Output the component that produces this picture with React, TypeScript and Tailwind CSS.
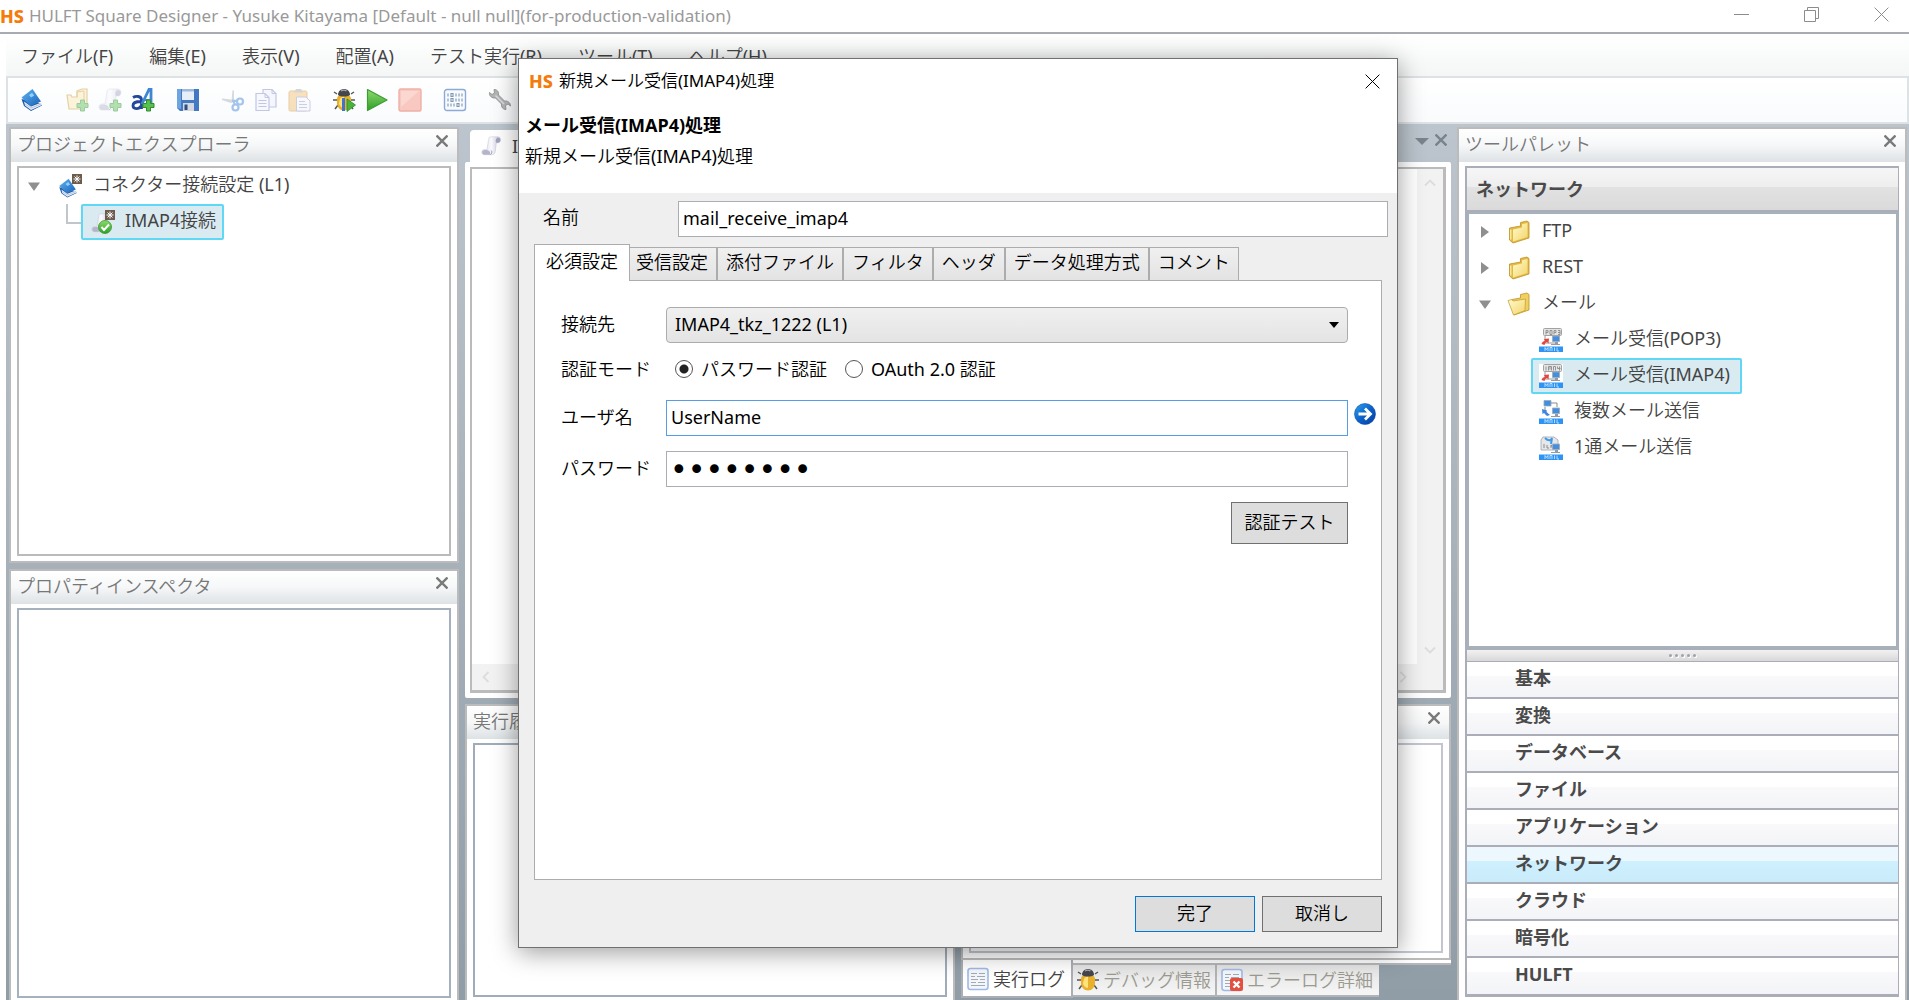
import { useState } from 'react';
import type { ReactNode } from 'react';

const menus = ['ファイル(F)', '編集(E)', '表示(V)', '配置(A)', 'テスト実行(R)', 'ツール(T)', 'ヘルプ(H)'];

const categories = [
  '基本',
  '変換',
  'データベース',
  'ファイル',
  'アプリケーション',
  'ネットワーク',
  'クラウド',
  '暗号化',
  'HULFT',
];

const dialogTabs = ['必須設定', '受信設定', '添付ファイル', 'フィルタ', 'ヘッダ', 'データ処理方式', 'コメント'];

const boldClass = "font-['Noto_Sans','Noto_Sans_CJK_JP',sans-serif] font-bold";

/* ---------- icons ---------- */

function Gradients() {
  return (
    <svg className="absolute h-0 w-0" aria-hidden="true">
      <defs>
        <linearGradient id="gBlue" x1="0" y1="0" x2="1" y2="1">
          <stop offset="0" stopColor="#5db4f2" />
          <stop offset="1" stopColor="#1b62b8" />
        </linearGradient>
        <linearGradient id="gGold" x1="0" y1="0" x2="1" y2="1">
          <stop offset="0" stopColor="#fffbd0" />
          <stop offset="1" stopColor="#f3d468" />
        </linearGradient>
        <linearGradient id="gGreen" x1="0" y1="0" x2="0" y2="1">
          <stop offset="0" stopColor="#8edb6c" />
          <stop offset="1" stopColor="#2f9e2a" />
        </linearGradient>
        <linearGradient id="gPaper" x1="0" y1="0" x2="1" y2="0">
          <stop offset="0" stopColor="#d4d4e4" />
          <stop offset="0.5" stopColor="#fbfbff" />
          <stop offset="1" stopColor="#c4c4da" />
        </linearGradient>
        <linearGradient id="gArrow" x1="0" y1="0" x2="1" y2="1">
          <stop offset="0" stopColor="#2fa5ee" />
          <stop offset="0.5" stopColor="#0b62cc" />
          <stop offset="1" stopColor="#083a9c" />
        </linearGradient>
      </defs>
    </svg>
  );
}

function Icon({ children, faded }: { children: ReactNode; faded?: boolean }) {
  return (
    <svg viewBox="0 0 24 24" aria-hidden="true" className={`h-6 w-6 flex-none ${faded ? 'opacity-45' : ''}`}>
      {children}
    </svg>
  );
}

const book = (
  <>
    <path d="M1.500 11 4 18l7 5 11-5.500-1-2z" fill="#1b5cae" />
    <path d="m4 13.500 7 5 10.500-4 .5 2.500-11 5-6-4.500z" fill="#e9eef5" />
    <path d="m5 16 6 4 10-4" fill="none" stroke="#a9b7c9" strokeWidth=".8" />
    <path d="M1.500 9.500 12.500 1l8.500 12.500L10.500 18z" fill="url(#gBlue)" />
    <path d="m9 7 3-2.200 2.200 2.700-3.200 2z" fill="#8fd0fa" />
  </>
);

const newBadge = (
  <>
    <path d="M14 0h10v10H14z" fill="#6d5c4c" />
    <path d="M19 1.500v7M15.500 5h7M16.500 2.500l5 5M21.500 2.500l-5 5" stroke="#fff" strokeWidth="1" />
  </>
);

const scroll = (
  <>
    <path d="M9 4c0-2 1-3 3-3h8c2 0 3 1.500 3 3.500S22 8 20 8h-2l-1 9c-.3 3-1.500 5-4 5H4c-2 0-3-1.500-3-3s1-3 3-3h3z" fill="url(#gPaper)" stroke="#c3c3d6" strokeWidth=".6" />
    <path d="M18 8c-1-1-1-4 .5-5.500C21 1.500 23 3 22.500 5.500 22 8 20 8 18 8z" fill="#a2a2bf" />
    <path d="M2 17.500c2-1.500 6-1 8 .5 1 1.500 1 3 .5 4H4c-2 0-3-2-2-4.500z" fill="#b5b5ca" />
    <path d="M12 17c1.500 2 .5 4-1 5" fill="none" stroke="#8c8ca8" />
  </>
);

const plusBadge = (
  <path d="M15.500 12h4v3.500H23v4h-3.500V23h-4v-3.500H12v-4h3.500z" fill="#59c04f" stroke="#2d8e2b" strokeWidth="1" />
);

const folder = (
  <>
    <path d="M2.500 8 13.500 6V2.500L20 1l2 1.500V18L6 23l-3.500-3z" fill="#e3b941" stroke="#bd9327" strokeWidth=".8" />
    <path d="m6 9.500 9-2V4.200l5.500-1.200v14L6 21.500z" fill="url(#gGold)" />
    <path d="M3.800 9.500v10" stroke="#fff3b0" strokeWidth="1.200" />
  </>
);

const folderOpen = (
  <>
    <path d="M5 7.500 13.500 6V2.500L20 1l2 1.500V18L7 23z" fill="#f0d060" stroke="#bd9327" strokeWidth=".8" />
    <path d="M1 8.500 5 7.500 6 9l12.500-2L18 18.500 6.500 23z" fill="url(#gGold)" stroke="#c9a136" strokeWidth=".8" />
  </>
);

const bug = (
  <>
    <path d="M5 6 2 4M19 6l3-2M5 12H1M19 12h4M6 17l-3 4M18 17l3 4" stroke="#55565c" strokeWidth="1.500" fill="none" />
    <path d="M5 11c0-3 3-5 7-5s7 2 7 5v4c0 4-3 7.500-7 7.500S5 19 5 15z" fill="#e8b02c" />
    <path d="M8 11c1-2 3-2.500 4-2.500V20c-3 0-5-3-5-5z" fill="#ffe37a" />
    <path d="M6 7c0-4 3-6 6-6s6 2 6 6c-3 2-9 2-12 0z" fill="#45464c" />
    <path d="M9 3c1.500-1 4-1 5.500 0" stroke="#a8abb1" fill="none" strokeWidth="1.200" />
  </>
);

const logSheet = (
  <>
    <rect x="2" y="1.500" width="20" height="21" rx="2.500" fill="#f3f6fb" stroke="#9fbae6" strokeWidth="1.600" />
    <path d="M5 6.500h6M13 6.500h6M5 9.500h4M11 9.500h8M5 12.500h7M14 12.500h5M5 15.500h5M12 15.500h7M5 18.500h14" stroke="#a4aab4" strokeWidth="1.200" />
  </>
);

const icons = {
  book: <Icon>{book}</Icon>,
  folderPlus: (
    <Icon faded>
      <path d="M2 7h4l1 2h5V3l5-2h5v16l-5 4H4z" fill="#fbeab0" stroke="#c99b36" strokeWidth="1.200" />
      <path d="M12 9V4l7-1v14" fill="none" stroke="#c99b36" />
      {plusBadge}
    </Icon>
  ),
  scrollPlus: (
    <Icon faded>
      {scroll}
      {plusBadge}
    </Icon>
  ),
  letters: (
    <Icon>
      <path d="M2 9.500c2.500-1.500 8.500-2 8.500 2.500v9M10 13.500c-4 0-8 .5-8 4 0 4 6 4 8 .5" fill="none" stroke="#23479b" strokeWidth="2.800" />
      <path d="M11 16 18 1.500h2V20" fill="none" stroke="#3f86d3" strokeWidth="2.800" />
      <path d="M14 12h6" stroke="#3f86d3" strokeWidth="2" />
      {plusBadge}
    </Icon>
  ),
  save: (
    <Icon>
      <path d="M1 1h22v22H4l-3-3z" fill="#4379c2" />
      <path d="M1 1h4v20l-4-1z" fill="#6ea4e2" />
      <path d="M6 1h12v11H6z" fill="#e8eef7" />
      <path d="M6 1h12v2.500H6z" fill="#9eb9de" />
      <path d="M7 15h11v8H7z" fill="#d4d9df" />
      <path d="M8.500 16.500h3V22h-3z" fill="#2b4d80" />
    </Icon>
  ),
  cut: (
    <Icon faded>
      <path d="m11.500 2 1.500 1v9l-2.500 1zM1 10.500l9 1 3 2-3 1.500-9-3z" fill="#a9aeb6" />
      <circle cx="19" cy="13.500" r="3" fill="none" stroke="#3c7fd6" strokeWidth="2.200" />
      <circle cx="14.500" cy="19.500" r="3" fill="none" stroke="#3c7fd6" strokeWidth="2.200" />
      <path d="m11 12.500 5 .5M12 13l2 3.500" stroke="#3c7fd6" strokeWidth="2" />
    </Icon>
  ),
  copy: (
    <Icon faded>
      <path d="M9 1.500h9l4 4V19H9z" fill="#eef0fc" stroke="#7d85c6" strokeWidth="1.200" />
      <path d="M2 5.500h9l4 4v13H2z" fill="#f4f5fe" stroke="#7d85c6" strokeWidth="1.200" />
      <path d="M11 5.500v4h4M18 1.500v4h4M4.500 12.500h8M4.500 15.500h8M4.500 18.500h8" fill="none" stroke="#7d85c6" />
    </Icon>
  ),
  paste: (
    <Icon faded>
      <rect x="2" y="3" width="18" height="20" rx="1.500" fill="#f2bf6e" stroke="#d1923c" />
      <path d="M7 4.500 9 1h5l2 3.500z" fill="#a7a7ad" />
      <path d="M9.500 9H19l4 4v10H9.500z" fill="#f4f4fd" stroke="#9297c4" />
      <path d="M12 13.500h6M12 16.500h8M12 19.500h8" stroke="#9297c4" />
    </Icon>
  ),
  debug: (
    <Icon>
      {bug}
      <path d="M10 10h3v13h-3z" fill="#3d73d1" />
      <path d="m15 11 8.500 6-8.500 6.500z" fill="#49b33c" stroke="#2c8d26" strokeWidth=".8" />
    </Icon>
  ),
  play: (
    <Icon>
      <path d="M2.500 1.500 22 12 2.500 22.500z" fill="url(#gGreen)" stroke="#3d9d33" strokeWidth="1.200" strokeLinejoin="round" />
    </Icon>
  ),
  stop: (
    <Icon faded>
      <rect x="1" y="1" width="22" height="22" rx="1.500" fill="#f58a78" stroke="#e0533f" strokeWidth="1.400" />
      <path d="M3 3h18L3 19z" fill="#f8aa9b" />
    </Icon>
  ),
  binary: (
    <Icon>
      <rect x="1.500" y="1.500" width="21" height="21" rx="2.500" fill="#f7faff" stroke="#8faad2" strokeWidth="1.400" />
      <path d="M5 5.500v3M8 5.500h2v3H8zM13 5.500v3M16 5.500v3M19 5.500v3M5 10.500v3M8 10.500h2v3H8zM13 10.500v3M16 10.500v3M19 10.500v3M5 15.500v3M8 15.500v3M11 15.500v3M14 15.500h2v3h-2zM19 15.500v3" fill="none" stroke="#7f95b0" strokeWidth="1.100" />
    </Icon>
  ),
  wrench: (
    <Icon>
      <path d="M1.500 4.500 4 6.500 6.500 5 6 1.500c3 0 5 2 4.500 5.500l6 6c3-.5 6 1.500 6 5l-2.500-2-2.500 1.500.5 4c-3 0-5-2.500-4.500-5.500l-6-6C4 10.500 1 8 1.500 4.500z" fill="#b4b4b4" stroke="#929292" strokeWidth=".9" />
      <path d="m7.500 7.500 8.500 8.500" stroke="#dcdcdc" strokeWidth="1.400" />
    </Icon>
  ),
};

const toolGroups: { name: string; label: string }[][] = [
  [{ name: 'book', label: 'プロジェクト' }],
  [
    { name: 'folderPlus', label: 'フォルダ追加' },
    { name: 'scrollPlus', label: 'スクリプト追加' },
    { name: 'letters', label: '変数追加' },
  ],
  [{ name: 'save', label: '保存' }],
  [
    { name: 'cut', label: '切り取り' },
    { name: 'copy', label: 'コピー' },
    { name: 'paste', label: '貼り付け' },
  ],
  [
    { name: 'debug', label: 'デバッグ実行' },
    { name: 'play', label: '実行' },
    { name: 'stop', label: '停止' },
  ],
  [{ name: 'binary', label: 'データ' }],
  [{ name: 'wrench', label: '設定' }],
];

function MailIcon({ kind }: { kind: 'pop' | 'imap' | 'multi' | 'single' }) {
  const receive = kind === 'pop' || kind === 'imap';
  return (
    <svg viewBox="0 0 24 24" aria-hidden="true" className="h-6 w-6 flex-none">
      <path d="M0 0h24v24H0z" fill="#fff" />
      {receive && (
        <>
          <rect x="4.500" y=".5" width="18" height="7" rx="1" fill="#e4e4e4" stroke="#a2a2a2" />
          {kind === 'pop' ? (
            <path d="M7 6.500v-4h2v2H7M11 2.500h2v4h-2zM15 6.500v-4h2v2h-2M19 2.500h2v4h-2M19 4.500h2" fill="none" stroke="#8a8a8a" strokeWidth=".9" />
          ) : (
            <path d="M7 2.500v4M9.500 6.500v-4h3v4M11 2.500v3M14.500 6.500v-4h2v4M18.500 2.500v2h3M20.500 2.500v4" fill="none" stroke="#8a8a8a" strokeWidth=".9" />
          )}
          <path d="M6 8v7h10" fill="none" stroke="#9a9a9a" />
          <path d="M2.500 16c.5-2 2-3 3.500-3l-1-2 5-.5-.5 5-1.500-1.500c-2 .5-2 2-2.500 3z" fill="#e8433c" />
        </>
      )}
      {kind === 'multi' && (
        <>
          <path d="M5 .5h7V6H5z" fill="#3f8fe2" stroke="#a0a8b2" strokeWidth=".8" />
          <path d="M12 3h6v4M6 7v5" fill="none" stroke="#8b8b8b" />
          <path d="m3 9 5 1.500-.5 1.500 3.500 3-3 1-3-3-1.500 1z" fill="#3d86e0" />
        </>
      )}
      {kind === 'single' && (
        <>
          <path d="M4 1h11l4 3v10H2V4z" fill="#e5e7ea" stroke="#9fa3a9" strokeWidth=".8" />
          <path d="M6 2c3 3 6 3 7 0l-1 6" fill="none" stroke="#3e9ae6" strokeWidth="2" />
          <path d="M4 9h2M4 11h2M8 9v3h2M12 12V9l2 3V9M16 9v3" fill="none" stroke="#8a8a8a" />
        </>
      )}
      <path d="M13.500 8h7v5.500h-7z" fill="#3f8fe2" stroke="#a5adb8" strokeWidth=".9" />
      <path d="M16 14h3v2h-3zM12 16h9v1h-9z" fill="#969ca5" />
      <path d="M0 18.500h24V24H0z" fill="#2e94f4" />
      <path d="M6 23v-3.500l1.500 2L9 19.500V23M11 23v-3.500h2V23M15.500 19.500V23M18 19.500V23h2" fill="none" stroke="#d7ecff" strokeWidth=".8" />
    </svg>
  );
}

function Cross({ className, width = 1 }: { className: string; width?: number }) {
  return (
    <svg viewBox="0 0 12 12" aria-hidden="true" className={className}>
      <path d="m.5.5 11 11M11.500.5l-11 11" stroke="currentColor" strokeWidth={width} fill="none" />
    </svg>
  );
}

function Caret({ open }: { open?: boolean }) {
  return (
    <svg viewBox="0 0 12 12" aria-hidden="true" className="h-3 w-3 flex-none fill-[#8f8f8f]">
      <path d={open ? 'M0 2.500h12L6 11z' : 'M2 0v12l8-6z'} />
    </svg>
  );
}

function Chevron({ className = '' }: { className?: string }) {
  return (
    <svg viewBox="0 0 12 12" aria-hidden="true" className={`h-3 w-3 flex-none text-[#dcdcdc] ${className}`}>
      <path d="m1 8.500 5-5 5 5" stroke="currentColor" strokeWidth="1.800" fill="none" />
    </svg>
  );
}

/* ---------- panels ---------- */

interface PanelProps {
  title: string;
  className?: string;
  children: ReactNode;
}

function Panel({ title, className = '', children }: PanelProps) {
  return (
    <section className={`flex min-h-0 flex-col border-2 border-[#bbb] bg-white px-1.5 ${className}`}>
      <header className="-mx-1.5 mb-1 flex h-[33px] flex-none items-start justify-between bg-linear-to-b from-white via-[#f6f7f8] to-[#dde2e5] pr-[9px] pl-1.5">
        <h2 className="pt-px leading-7 text-[#777]">{title}</h2>
        <button type="button" aria-label={`${title}を閉じる`} className="mt-1.5 text-[#7a7a7a]">
          <Cross className="h-3 w-3" width={2.4} />
        </button>
      </header>
      {children}
    </section>
  );
}

function ProjectTree() {
  return (
    <ul className="min-h-0 flex-1 border-2 border-[#bbb]">
      <li>
        <div className="flex h-9 items-center pl-[9px]">
          <Caret open />
          <span className="ml-[18px]">
            <Icon>
              <g transform="translate(0 4) scale(.85)">{book}</g>
              {newBadge}
            </Icon>
          </span>
          <span className="ml-[11px] pb-1">コネクター接続設定 (L1)</span>
        </div>
        <ul className="flex pl-[47px]">
          <li className="flex">
            <span className="h-5 w-[15px] border-b-2 border-l-2 border-[#bfc6cc]" />
            <div className="flex h-9 items-center rounded-xs border-2 border-[#5fd8f5] bg-[#daeaf1] pr-1.5 pl-2">
              <Icon>
                <g transform="translate(0 3) scale(.85)">{scroll}</g>
                {newBadge}
                <circle cx="14" cy="17" r="6.500" fill="url(#gGreen)" stroke="#2f9a2b" strokeWidth=".8" />
                <path d="m10.500 17 2.500 3 5-5.500" stroke="#fff" strokeWidth="2" fill="none" />
              </Icon>
              <span className="ml-2.5 pb-1">IMAP4接続</span>
            </div>
          </li>
        </ul>
      </li>
    </ul>
  );
}

function Palette() {
  const folders = [{ name: 'FTP' }, { name: 'REST' }, { name: 'メール', open: true }];
  const tools: { kind: 'pop' | 'imap' | 'multi' | 'single'; name: string }[] = [
    { kind: 'pop', name: 'メール受信(POP3)' },
    { kind: 'imap', name: 'メール受信(IMAP4)' },
    { kind: 'multi', name: '複数メール送信' },
    { kind: 'single', name: '1通メール送信' },
  ];

  return (
    <div className="mb-[3px] flex min-h-0 flex-1 flex-col border-2 border-r-1 border-[#abaeb8]">
      <h3
        className={`flex h-[44px] flex-none items-center border-b-2 border-[#abaeb8] bg-[linear-gradient(#f6f6f6,#eeeeee_44%,#e2e2e2_46%,#dadada)] pl-[9px] text-[#4a4a4a] ${boldClass}`}
      >
        ネットワーク
      </h3>
      <div className="min-h-0 flex-1 border-2 border-[#a5b1bb]">
        <ul>
          {folders.map((f) => (
            <li key={f.name} className="flex h-9 items-center pl-2.5">
              <Caret open={f.open} />
              <span className="ml-4">
                <Icon>{f.open ? folderOpen : folder}</Icon>
              </span>
              <span className="ml-[11px] pb-1">{f.name}</span>
            </li>
          ))}
        </ul>
        <ul className="flex flex-col items-start pl-[62px]">
          {tools.map((t) => (
            <li
              key={t.kind}
              className={`flex h-9 items-center rounded-xs border-2 pr-2.5 pl-1.5 ${
                t.kind === 'imap' ? 'border-[#5fd8f5] bg-[#daeaf1]' : 'border-transparent'
              }`}
            >
              <MailIcon kind={t.kind} />
              <span className="ml-[11px] pb-1">{t.name}</span>
            </li>
          ))}
        </ul>
      </div>
      <div className="flex h-[14px] flex-none items-center justify-center gap-[3px] border-t-2 border-b border-[#abaeb8] bg-linear-to-b from-[#f2f2f2] to-[#d8d8d8]">
        {[0, 1, 2, 3, 4].map((i) => (
          <span key={i} className="h-[3px] w-[3px] rounded-full bg-[#a0a0a8] shadow-[1px_1px_0_#fff]" />
        ))}
      </div>
      {categories.map((c) => (
        <button
          key={c}
          type="button"
          className={`flex h-[37px] flex-none items-start border-b-2 border-[#abaeb8] pt-0.5 pl-12 leading-7 text-[#4a4a4a] last:border-b-1 ${boldClass} ${
            c === 'ネットワーク'
              ? 'bg-[linear-gradient(#ecf8fe_0_40%,#cff0fe_40%,#c9ebfa)]'
              : 'bg-[linear-gradient(#fff_0_40%,#f9f9fb_40%,#f3f4f7)]'
          }`}
        >
          {c}
        </button>
      ))}
    </div>
  );
}

function Editor() {
  return (
    <section className="flex min-h-0 flex-1 flex-col">
      <div className="flex h-[35px] flex-none items-start justify-between pt-[3px]">
        <div className="ml-[5px] flex h-8 w-52 items-center rounded-t-sm bg-white pl-2.5">
          <Icon>
            <g transform="translate(1 2) scale(.85)">{scroll}</g>
          </Icon>
          <span className="ml-2">IMAP4</span>
        </div>
        <div className="flex items-center gap-1.5 pt-1 pr-1 text-[#78838b]">
          <svg viewBox="0 0 14 12" aria-hidden="true" className="h-3 w-[14px] fill-current">
            <path d="M0 4h14l-7 7z" />
          </svg>
          <button type="button" aria-label="エディタを閉じる">
            <Cross className="h-3 w-3" width={2.4} />
          </button>
        </div>
      </div>
      <div className="flex min-h-0 flex-1 flex-col rounded-xs bg-white p-[5px]">
        <div className="flex min-h-0 flex-1 flex-col border-2 border-r-3 border-b-3 border-[#bbb]">
          <div className="flex min-h-0 flex-1">
            <div className="flex-1" />
            <div className="flex w-[26px] flex-col items-center justify-between bg-[#f2f2f2] py-2">
              <Chevron />
              <Chevron className="rotate-180" />
            </div>
          </div>
          <div className="flex h-[26px] items-center justify-between bg-[#f2f2f2] pr-[34px] pl-2">
            <Chevron className="-rotate-90" />
            <Chevron className="rotate-90" />
          </div>
        </div>
      </div>
    </section>
  );
}

function LogPanel() {
  return (
    <div className="flex min-w-0 flex-col">
      <Panel title="実行ログ" className="flex-1">
        <div className="mb-[5px] flex-1 border-2 border-[#c3c5cf]" />
      </Panel>
      <div className="h-[5px] flex-none border-b-2 border-[#b5b7ba] bg-white" />
      <div className="flex h-[35px] flex-none items-start text-[#9b9a90]">
        <button
          type="button"
          className="-mt-[5px] flex h-[38px] items-center gap-[3px] border-2 border-t-0 border-[#abaeb5] bg-white pt-0.5 pr-1.5 pl-[3px] text-[#444]"
        >
          <Icon>{logSheet}</Icon>
          実行ログ
        </button>
        <button type="button" className="flex h-8 items-center gap-[3px] border-r-2 border-b-2 border-[#b0b3b8] bg-linear-to-b from-[#e4e4e4] to-[#f6f6f6] pr-1 pl-[3px]">
          <Icon>{bug}</Icon>
          デバッグ情報
        </button>
        <button type="button" className="flex h-8 items-center gap-[3px] border-b-2 border-[#b0b3b8] bg-linear-to-b from-[#e4e4e4] to-[#f6f6f6] pr-1.5 pl-[3px]">
          <Icon>
            {logSheet}
            <rect x="10" y="10" width="13" height="13" rx="2" fill="#e4503f" />
            <path d="m13.500 13.500 6 6M19.500 13.500l-6 6" stroke="#fff" strokeWidth="2.400" />
          </Icon>
          エラーログ詳細
        </button>
      </div>
    </div>
  );
}

/* ---------- dialog ---------- */

function Logo() {
  return <span className="text-[18px] leading-6 font-extrabold text-[#f47b0c]">HS</span>;
}

const fieldClass = 'h-9 w-full border border-[#abadb3] bg-white outline-none';

function MailDialog() {
  const [name, setName] = useState('mail_receive_imap4');
  const [user, setUser] = useState('UserName');
  const [password, setPassword] = useState('password');
  const [mode, setMode] = useState('password');
  const [tab, setTab] = useState(dialogTabs[0]);

  return (
    <div
      role="dialog"
      aria-labelledby="dialog-title"
      className="absolute top-[58px] left-[518px] flex h-[890px] w-[880px] flex-col border border-[#707070] bg-[#efefef] text-black shadow-[0_4px_24px_rgba(0,0,0,0.4)]"
    >
      <div className="h-[134px] flex-none bg-white">
        <div className="flex h-[44px] items-center pr-[17px] pl-2.5">
          <Logo />
          <h1 id="dialog-title" className="ml-1.5 flex-1 text-[17px]">
            新規メール受信(IMAP4)処理
          </h1>
          <button type="button" aria-label="閉じる">
            <Cross className="h-[15px] w-[15px]" width={0.8} />
          </button>
        </div>
        <p className={`mt-2 pl-1.5 leading-7 ${boldClass}`}>メール受信(IMAP4)処理</p>
        <p className="mt-[3px] pl-1.5 leading-7">新規メール受信(IMAP4)処理</p>
      </div>

      <div className="flex flex-none items-center pt-2 pr-[9px] pl-6">
        <label htmlFor="name" className="w-[135px] pb-1">
          名前
        </label>
        <input
          id="name"
          value={name}
          onChange={(e) => setName(e.target.value)}
          className={`${fieldClass} flex-1 px-1 pb-[3px]`}
        />
      </div>

      <div role="tablist" className="mt-[7px] flex flex-none items-end pl-[15px]">
        {dialogTabs.map((t) => (
          <button
            key={t}
            type="button"
            role="tab"
            aria-selected={t === tab}
            onClick={() => setTab(t)}
            className={
              t === tab
                ? 'z-10 -mr-[3px] -mb-px h-[37px] border border-b-0 border-[#acacac] bg-white px-[11px] pb-1'
                : 'h-[33px] border border-b-0 border-[#acacac] bg-linear-to-b from-[#f0f0f0] to-[#e3e3e3] px-2 pb-1'
            }
          >
            {t}
          </button>
        ))}
      </div>

      <form className="mr-[15px] ml-[15px] flex-1 border border-[#acacac] bg-white pt-[26px] pl-[26px]">
        <div className="grid grid-cols-[105px_1fr_33px] items-center">
          <label htmlFor="target" className="pb-0.5">
            接続先
          </label>
          <div className="relative">
            <select
              id="target"
              className="h-9 w-full appearance-none rounded-sm border border-[#acacac] bg-linear-to-b from-[#f0f0f0] to-[#e4e4e4] px-2 pb-0.5"
            >
              <option>IMAP4_tkz_1222 (L1)</option>
            </select>
            <svg viewBox="0 0 10 6" aria-hidden="true" className="pointer-events-none absolute top-[15px] right-[9px] h-1.5 w-2.5">
              <path d="M0 0h10L5 6z" />
            </svg>
          </div>
        </div>

        <div
          role="radiogroup"
          aria-labelledby="mode-label"
          className="mt-3 grid grid-cols-[105px_1fr_33px] items-center"
        >
          <span id="mode-label">認証モード</span>
          <div className="flex h-7 items-center gap-[18px] pl-[9px]">
            {[
              { id: 'password', label: 'パスワード認証' },
              { id: 'oauth', label: 'OAuth 2.0 認証' },
            ].map((m) => (
              <label key={m.id} className="flex items-center gap-2">
                <input
                  type="radio"
                  name="mode"
                  checked={mode === m.id}
                  onChange={() => setMode(m.id)}
                  className="h-[18px] w-[18px] appearance-none rounded-full border border-[#555] bg-white checked:bg-[radial-gradient(#222_0_4px,white_5px)]"
                />
                {m.label}
              </label>
            ))}
          </div>
        </div>

        <div className="mt-[17px] grid grid-cols-[105px_1fr_33px] items-center">
          <label htmlFor="user" className="pb-0.5">
            ユーザ名
          </label>
          <input
            id="user"
            value={user}
            onChange={(e) => setUser(e.target.value)}
            className="h-9 w-full border border-[#569de5] bg-white px-1 pb-0.5 outline-none"
          />
          <button type="button" aria-label="変数を挿入" className="mb-2 ml-1.5 h-[22px] w-[22px]">
            <svg viewBox="0 0 22 22" aria-hidden="true">
              <circle cx="11" cy="11" r="10.500" fill="url(#gArrow)" stroke="#0c4da8" strokeWidth=".6" />
              <path d="M4.500 11H16M11 5.500l5.500 5.500-5.500 5.500" stroke="#fff" strokeWidth="2.800" fill="none" />
            </svg>
          </button>
        </div>

        <div className="mt-[15px] grid grid-cols-[105px_1fr_33px] items-center">
          <label htmlFor="password" className="pb-0.5">
            パスワード
          </label>
          <input
            id="password"
            type="password"
            value={password}
            onChange={(e) => setPassword(e.target.value)}
            className={`${fieldClass} px-[3px] font-['DejaVu_Sans',sans-serif] text-[30px]`}
          />
        </div>

        <div className="mt-[15px] mr-[33px] flex justify-end">
          <button type="button" className="h-[42px] w-[117px] border border-[#707070] bg-[#ddd] pb-0.5">
            認証テスト
          </button>
        </div>
      </form>

      <div className="flex h-[67px] flex-none justify-end gap-[7px] pt-4 pr-[15px]">
        <button type="button" className="h-9 w-[120px] border border-[#0078d7] bg-[#ddd] pb-0.5">
          完了
        </button>
        <button type="button" className="h-9 w-[120px] border border-[#707070] bg-[#ddd] pb-0.5">
          取消し
        </button>
      </div>
    </div>
  );
}

export default function App() {
  return (
    <div className="relative flex h-screen flex-col overflow-hidden bg-white font-['Noto_Sans','Noto_Sans_CJK_JP_DemiLight','Noto_Sans_CJK_JP_Light','Noto_Sans_CJK_JP',sans-serif] text-[18px] leading-6 text-[#444]">
      <Gradients />

      {/* Title bar */}
      <header className="flex h-[34px] flex-none items-center border-b-2 border-[#a8abb1]">
        <Logo />
        <span className="ml-[5px] flex-1 text-[17px] text-[#999]">
          HULFT Square Designer - Yusuke Kitayama [Default - null null](for-production-validation)
        </span>
        <div className="flex items-center gap-[55px] pr-5 pb-[3px] text-[#8c8c8c]">
          <button type="button" aria-label="最小化" className="h-px w-[15px] bg-current" />
          <button type="button" aria-label="元に戻す">
            <svg viewBox="0 0 15 15" aria-hidden="true" className="h-[15px] w-[15px]">
              <path d="M.5 3.500h11v11H.5zM3.500 3.500v-3h11v11h-3" fill="none" stroke="currentColor" />
            </svg>
          </button>
          <button type="button" aria-label="ウィンドウを閉じる">
            <Cross className="h-[15px] w-[15px]" width={0.8} />
          </button>
        </div>
      </header>

      {/* Menu */}
      <nav className="ml-1.5 flex h-[42px] flex-none items-center gap-9 bg-linear-to-b from-white to-[#f4f7f6] pt-0.5 pl-[15px]">
        {menus.map((m) => (
          <button key={m} type="button" className="whitespace-nowrap">
            {m}
          </button>
        ))}
      </nav>

      {/* Toolbar */}
      <div className="ml-1.5 flex h-12 flex-none items-center gap-[21px] border-2 border-[#dde3e4] bg-linear-to-b from-white to-[#f9fbfd] pl-3">
        {toolGroups.map((group) => (
          <div key={group[0].name} className="flex gap-[9px]">
            {group.map((t) => (
              <button key={t.name} type="button" aria-label={t.label}>
                {icons[t.name as keyof typeof icons]}
              </button>
            ))}
          </div>
        ))}
      </div>

      {/* Workspace */}
      <main className="ml-1.5 flex min-h-0 flex-1 gap-1.5 bg-linear-to-b from-[#bcc5cd] to-[#909da7] pt-[3px] pr-0.5 pl-[3px]">
        <div className="flex w-[450px] flex-none flex-col gap-1.5">
          <Panel title="プロジェクトエクスプローラ" className="h-[436px] flex-none pb-[5px]">
            <ProjectTree />
          </Panel>
          <Panel title="プロパティインスペクタ" className="flex-1 border-b-0">
            <div className="mb-0.5 flex-1 border-2 border-[#a5b2be]" />
          </Panel>
        </div>

        <div className="flex min-w-0 flex-1 flex-col gap-1.5">
          <Editor />
          <div className="grid h-[296px] flex-none grid-cols-2 gap-1.5">
            <Panel title="実行履歴" className="border-b-0">
              <div className="mb-[3px] flex-1 border-2 border-[#a0adb9]" />
            </Panel>
            <LogPanel />
          </div>
        </div>

        <Panel title="ツールパレット" className="w-[450px] flex-none border-b-0">
          <Palette />
        </Panel>
      </main>

      <MailDialog />
    </div>
  );
}
